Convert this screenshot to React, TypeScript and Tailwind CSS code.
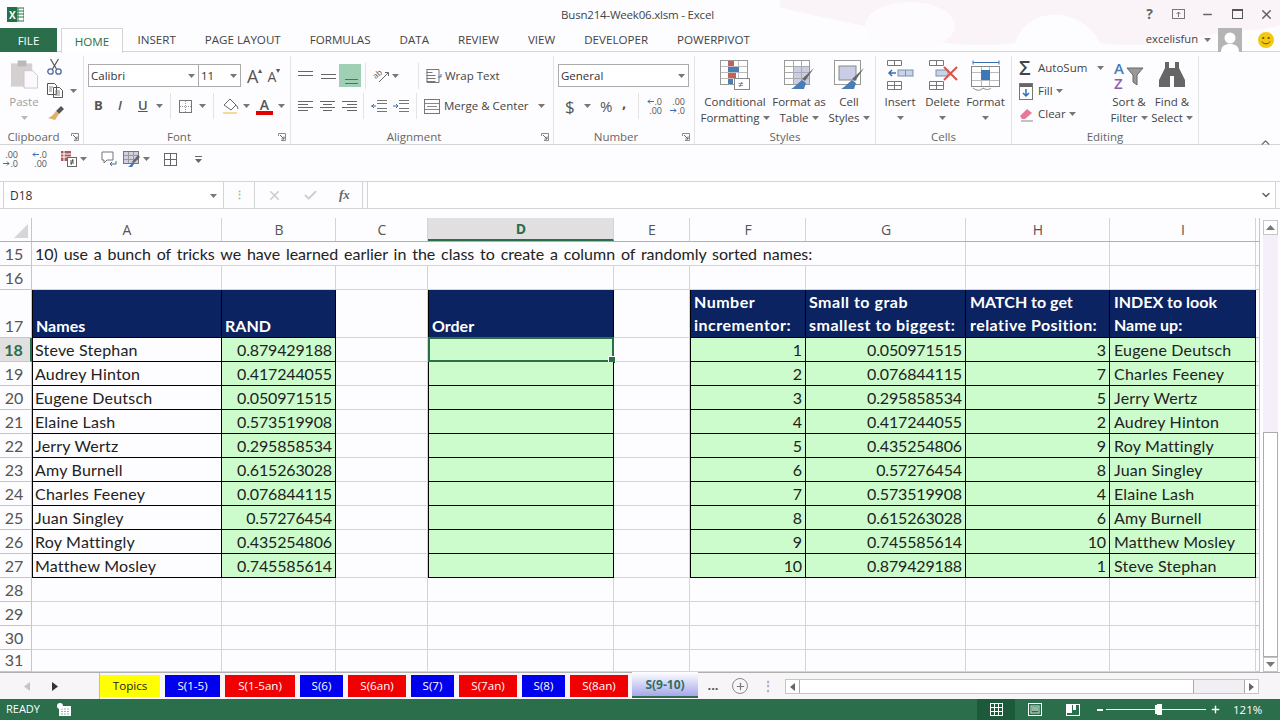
import { ReactNode } from 'react';
import { Check, ChevronDown, ChevronUp, Minus, Plus, X } from 'lucide-react';

const ui = "font-['Open_Sans',sans-serif]";
const gridFont = "font-['Lato',sans-serif]";

const Caret = ({ className = '' }: { className?: string }) => (
  <svg width="7" height="4" viewBox="0 0 7 4" className={`shrink-0 ${className}`}>
    <path d="M0 0h7L3.5 4z" fill="#777" />
  </svg>
);

const Launcher = () => (
  <svg width="8" height="8" viewBox="0 0 8 8" className="shrink-0">
    <path d="M.5 3V.5h7v7H3" fill="none" stroke="#8a8a8a" />
    <path d="M2 2l4 4M6 3.5V6H3.5" fill="none" stroke="#666" />
  </svg>
);

const Sep = () => <div className="w-px h-[26px] bg-[#e3e3e3] shrink-0" />;

function Lines({ rows }: { rows: number[][] }) {
  return (
    <svg width="17" height="14" viewBox="0 0 17 14" className="shrink-0">
      {rows.map(([x1, x2, y], i) => (
        <path key={i} d={`M${x1} ${y}.5H${x2}`} stroke="#666" />
      ))}
    </svg>
  );
}

// increase / decrease decimal buttons
function Decimal({ inc, className = '' }: { inc?: boolean; className?: string }) {
  const arrow = (
    <svg width="7" height="5" viewBox="0 0 7 5" className="shrink-0">
      <path d={inc ? 'M7 2.500H1M3 .5l-2 2 2 2' : 'M0 2.500h6M4 .5l2 2-2 2'} fill="none" stroke="#3b6fb0" />
    </svg>
  );
  return (
    <div className={`w-[15px] shrink-0 flex flex-col items-end text-[9px] leading-[9px] text-[#555] whitespace-nowrap ${className}`}>
      {inc ? <div className="flex items-center">{arrow}.0</div> : <div>.00</div>}
      {inc ? <div>.00</div> : <div className="flex items-center">{arrow}.0</div>}
    </div>
  );
}

function Grp({ w, label, launcher, children }: { w: string; label: string; launcher?: boolean; children: ReactNode }) {
  return (
    <div className={`${w} h-full shrink-0 flex flex-col border-r border-[#e4e4e4]`}>
      <div className="h-[76px] flex">{children}</div>
      <div className={`h-[17px] pt-[2px] flex items-center relative ${launcher ? 'pr-[16px]' : ''}`}>
        <span className="flex-1 text-center text-[11.5px] text-[#666]">{label}</span>
        {launcher && <span className="absolute right-[4px] top-[6px] flex"><Launcher /></span>}
      </div>
    </div>
  );
}

function BigBtn({ w, icon, l1, l2, caret }: { w: string; icon: ReactNode; l1: string; l2?: string; caret?: boolean }) {
  return (
    <div className={`${w} shrink-0 flex flex-col items-center pt-[4px]`}>
      <div className="h-[33px] flex items-start justify-center">{icon}</div>
      <div className="mt-[1px] h-[16px] leading-[16px] text-[11.5px] text-[#444] whitespace-nowrap">{l1}</div>
      <div className="h-[16px] flex items-center gap-[3px] text-[11.5px] text-[#444] whitespace-nowrap">
        {l2}
        {caret && <Caret />}
      </div>
    </div>
  );
}

const Combo = ({ w, text }: { w: string; text: string }) => (
  <div className={`${w} h-[23px] border border-[#ababab] bg-white flex items-center justify-between pl-[2px] pr-[3px] text-[11.5px] text-[#333]`}>
    <span>{text}</span>
    <Caret />
  </div>
);

const tabs = ['HOME', 'INSERT', 'PAGE LAYOUT', 'FORMULAS', 'DATA', 'REVIEW', 'VIEW', 'DEVELOPER', 'POWERPIVOT'];

function TitleBar() {
  return (
    <>
      <div className="h-[28px] flex items-center relative">
        <svg width="17" height="17" viewBox="0 0 17 17" className="ml-[7px] shrink-0">
          <rect x="6" y="2" width="11" height="13" fill="#fff" stroke="#217346" />
          <path d="M11 2v13M6 5h11M6 8h11M6 11h11" stroke="#217346" />
          <rect x="0" y="1" width="10" height="15" fill="#217346" />
          <text x="2" y="13" fontSize="10" fontWeight="700" fill="#fff" fontFamily="Open Sans">X</text>
        </svg>
        <div className="absolute inset-x-0 top-[5px] text-center text-[11.5px] tracking-[-0.2px] leading-[20px] text-[#444] pr-[5px]">Busn214-Week06.xlsm - Excel</div>
        <div className="ml-auto flex items-center gap-[16px] pr-[6px] text-[#666]">
          <span className="text-[14px] font-bold leading-none mr-[3px]">?</span>
          <svg width="13" height="10" viewBox="0 0 13 10"><rect x=".5" y=".5" width="12" height="9" fill="none" stroke="#777" /><path d="M6.5 8V3M4.5 5l2-2 2 2M2 .5h9" fill="none" stroke="#777" /></svg>
          <Minus size={13} strokeWidth={2.5} color="#666" />
          <svg width="11" height="10" viewBox="0 0 11 10" className="ml-[2px]"><rect x=".5" y=".5" width="10" height="9" fill="none" stroke="#555" /><path d="M0 1.5h11" stroke="#555" /></svg>
          <X size={15} strokeWidth={2.5} color="#666" />
        </div>
      </div>
      <div className="h-[24px] flex items-stretch border-b border-[#d4d4d4] relative">
        <div className="w-[57px] bg-[#2a6e4b] text-white text-[11.6px] flex items-center justify-center mb-[-1px] pt-[1px]">FILE</div>
        <div className="flex ml-[4px] text-[11.6px] text-[#444]">
          {tabs.map((t) =>
            t === 'HOME' ? (
              <div key={t} className="w-[62px] h-[25px] flex items-center justify-center pt-[1px] bg-[#fefefe] border border-b-0 border-[#d4d4d4] text-[#2a6e4b]">{t}</div>
            ) : (
              <div key={t} className="px-[14.5px] pt-[1px] flex items-center whitespace-nowrap">{t}</div>
            )
          )}
        </div>
        <div className="ml-auto flex items-center">
          <span className="text-[11.2px] text-[#444]">excelisfun</span>
          <Caret className="ml-[6px] mr-[7px]" />
          <div className="w-[24px] h-[24px] bg-[#b4b4b4] flex items-end justify-center overflow-hidden">
            <svg width="20" height="22" viewBox="0 0 20 22"><circle cx="10" cy="8" r="5.5" fill="#fff" /><path d="M1 22c0-6 4-8 9-8s9 2 9 8z" fill="#fff" /></svg>
          </div>
          <svg width="16" height="16" viewBox="0 0 16 16" className="ml-[16px] mr-[6px]">
            <circle cx="8" cy="8" r="8" fill="#f2c811" />
            <circle cx="5.3" cy="6" r="1.1" fill="#6a4a00" /><circle cx="10.7" cy="6" r="1.1" fill="#6a4a00" />
            <path d="M4 9.5c1 3 7 3 8 0" fill="none" stroke="#6a4a00" />
          </svg>
        </div>
      </div>
    </>
  );
}

function Ribbon() {
  return (
    <div className="h-[93px] flex border-b border-[#d4d4d4] pt-[4px] relative">
      {/* Clipboard */}
      <Grp w="w-[84px]" label="Clipboard" launcher>
        <div className="flex">
          <div className="w-[47px] flex flex-col items-center pt-[4px] pl-[1px] text-[#a0a0a0]">
            <svg width="29" height="30" viewBox="0 0 30 30">
              <rect x="1" y="3" width="22" height="24" fill="#d5d0d0" />
              <rect x="8" y="0" width="9" height="6" fill="#bdb8b8" />
              <path d="M14.5 10.5h9l5 5v13h-14z" fill="#fbf9fb" stroke="#cbc7cf" />
            </svg>
            <span className="text-[11.5px] leading-[16px] mt-[4px]">Paste</span>
            <Caret className="mt-[6px] opacity-50" />
          </div>
          <div className="flex flex-col pt-[3px] gap-[8px]">
            <svg width="15" height="16" viewBox="0 0 15 16">
              <path d="M3.500 0l6 10M11.500 0l-6 10" stroke="#555" strokeWidth="1.200" />
              <circle cx="3.500" cy="12.500" r="2.700" fill="none" stroke="#4d6a9a" strokeWidth="1.300" />
              <circle cx="11.500" cy="12.500" r="2.700" fill="none" stroke="#4d6a9a" strokeWidth="1.300" />
            </svg>
            <div className="flex items-center gap-[7px]">
              <svg width="16" height="15" viewBox="0 0 16 15"><path d="M.5.5h7l2 2v9h-9zM6.5 4.500h6l3 3v7h-9z" fill="#fff" stroke="#555" /><path d="M8 8h5M8 10h5M8 12h5M2 4h4M2 6h3M2 8h3" stroke="#888" /></svg>
              <Caret />
            </div>
            <svg width="17" height="15" viewBox="0 0 17 15"><path d="M9 5l5-5 3 3-5 5z" fill="#555" /><path d="M9 5l3 3-4 6-7-2c3-1 5-3 8-7z" fill="#e0b06a" /></svg>
          </div>
        </div>
      </Grp>

      {/* Font */}
      <Grp w="w-[207px]" label="Font" launcher>
        <div className="pl-[4px] pt-[8px] flex flex-col">
          <div className="flex items-center">
            <Combo w="w-[111px]" text="Calibri" />
            <Combo w="w-[43px] -ml-px" text="11" />
            <span className="ml-[6px] text-[#555] text-[18px] leading-none">A</span>
            <span className="text-[8px] text-[#555] -mt-[11px]">▴</span>
            <span className="ml-[5px] text-[#555] text-[14px] leading-none mt-[3px]">A</span>
            <span className="text-[8px] text-[#555] -mt-[11px]">▾</span>
          </div>
          <div className="flex items-center h-[26px] mt-[6px] pl-[6px] text-[13px] text-[#555]">
            <span className="font-bold w-[22px]">B</span>
            <span className="italic font-semibold w-[22px] pl-[2px]">I</span>
            <span className="underline font-semibold w-[16px]">U</span>
            <Caret className="ml-[2px] mr-[7px]" />
            <Sep />
            <svg width="13" height="13" viewBox="0 0 13 13" className="ml-[8px]"><rect x=".5" y=".5" width="12" height="12" fill="none" stroke="#777" /><path d="M6.500 1v11M1 6.500h11" stroke="#999" strokeDasharray="1 1" /></svg>
            <Caret className="ml-[7px] mr-[7px]" />
            <Sep />
            <svg width="18" height="16" viewBox="0 0 18 16" className="ml-[8px]"><path d="M2 7l6-6 6 6-5 5z" fill="#fff" stroke="#666" /><path d="M14 7c2 2 2 3 2 4" stroke="#888" /><path d="M1 15h14" stroke="#f6d9a0" strokeWidth="2" /></svg>
            <Caret className="ml-[3px] mr-[6px]" />
            <span className="relative w-[17px] h-[17px] text-center text-[14px] leading-[14px] font-semibold text-[#555]">
              A<span className="absolute left-0 bottom-0 w-[17px] h-[4px] bg-[#e30000]" />
            </span>
            <Caret className="ml-[5px]" />
          </div>
        </div>
      </Grp>

      {/* Alignment */}
      <Grp w="w-[263px]" label="Alignment" launcher>
        <div className="pl-[6px] pt-[8px] flex flex-col">
          <div className="flex items-center h-[23px]">
            <Lines rows={[[1, 16, 2], [1, 16, 6]]} />
            <div className="ml-[6px]"><Lines rows={[[1, 16, 5], [1, 16, 9]]} /></div>
            <div className="ml-[2px] w-[22px] h-[23px] bg-[#9fcfb5] flex items-center justify-center pt-[4px]"><Lines rows={[[3, 16, 8], [3, 16, 12]]} /></div>
            <div className="mx-[4px]"><Sep /></div>
            <svg width="17" height="15" viewBox="0 0 17 15" className="ml-[3px] overflow-visible"><text x="1" y="9" fontSize="8" fill="#555" transform="rotate(-40 5 8)" fontFamily="Open Sans">ab</text><path d="M6 14l9-9M12 4.500h3.500V8" fill="none" stroke="#666" /></svg>
            <Caret className="ml-[2px] mr-[19px]" />
            <Sep />
            <svg width="16" height="14" viewBox="0 0 16 14" className="ml-[7px]"><path d="M.5.5h9M.5 3.500h6M.5 6.500h9M.5 9.500h9M.5 12.500h9M1 .5h12v13H1z" fill="none" stroke="#777" /><path d="M15 5v3h-3" fill="none" stroke="#4d6a9a" /></svg>
            <span className="ml-[3px] text-[11.5px] text-[#444]">Wrap Text</span>
          </div>
          <div className="flex items-center h-[26px] mt-[6px]">
            <Lines rows={[[1, 16, 2], [1, 11, 5], [1, 16, 8], [1, 11, 11]]} />
            <div className="ml-[5px]"><Lines rows={[[1, 16, 2], [4, 13, 5], [1, 16, 8], [4, 13, 11]]} /></div>
            <div className="ml-[5px]"><Lines rows={[[1, 16, 2], [6, 16, 5], [1, 16, 8], [6, 16, 11]]} /></div>
            <div className="ml-[5px] mr-[7px]"><Sep /></div>
            <svg width="16" height="12" viewBox="0 0 16 12"><path d="M6 .5h10M6 3.500h10M6 8.500h10M6 11.500h10" stroke="#777" /><path d="M5 6H0M3 4L1 6l2 2" fill="none" stroke="#3b6fb0" /></svg>
            <svg width="16" height="12" viewBox="0 0 16 12" className="ml-[6px]"><path d="M6 .5h10M6 3.500h10M6 8.500h10M6 11.500h10" stroke="#777" /><path d="M0 6h5M3 4l2 2-2 2" fill="none" stroke="#3b6fb0" /></svg>
            <div className="ml-[7px] mr-[7px]"><Sep /></div>
            <svg width="16" height="15" viewBox="0 0 16 15"><rect x=".5" y=".5" width="15" height="14" fill="none" stroke="#777" /><path d="M1 4.500h14M1 10.500h14M3 7.500h10" stroke="#888" /></svg>
            <span className="ml-[4px] text-[11.5px] text-[#444] whitespace-nowrap">Merge &amp; Center</span>
            <Caret className="ml-[9px]" />
          </div>
        </div>
      </Grp>

      {/* Number */}
      <Grp w="w-[141px]" label="Number" launcher>
        <div className="pl-[4px] pt-[8px] flex flex-col">
          <Combo w="w-[131px]" text="General" />
          <div className="flex items-center h-[26px] mt-[6px] pl-[7px] text-[#555]">
            <span className="text-[17px] w-[13px] leading-none">$</span>
            <Caret className="ml-[6px] mr-[9px]" />
            <span className="text-[15px] w-[19px] leading-none">%</span>
            <span className="ml-[3px] text-[15px] font-bold w-[16px] leading-none -mt-[8px]">,</span>
            <div className="mr-[8px]"><Sep /></div>
            <Decimal inc />
            <Decimal className="ml-[8px]" />
          </div>
        </div>
      </Grp>

      {/* Styles */}
      <Grp w="w-[181px]" label="Styles">
        <BigBtn w="w-[80px]" l1="Conditional" l2="Formatting" caret icon={
          <svg width="31" height="31" viewBox="0 0 31 31">
            <rect x=".5" y=".5" width="27" height="24" fill="#fff" stroke="#999" />
            <path d="M9.500 1v24M18.500 1v24M1 6.500h26M1 12.500h26M1 18.500h26" stroke="#bbb" />
            <rect x="8" y="1" width="6" height="5" fill="#c8605a" /><rect x="8" y="7" width="11" height="5" fill="#4a7db5" /><rect x="8" y="13" width="8" height="5" fill="#c8605a" /><rect x="8" y="19" width="5" height="5" fill="#4a7db5" />
            <rect x="14.500" y="18.500" width="15" height="11" fill="#fff" stroke="#888" />
            <text x="18" y="28" fontSize="10" fill="#555" fontFamily="Open Sans">≠</text>
          </svg>} />
        <BigBtn w="w-[48px]" l1="Format as" l2="Table" caret icon={
          <svg width="31" height="31" viewBox="0 0 31 31">
            <rect x=".5" y=".5" width="25" height="24" fill="#fff" stroke="#999" />
            <rect x="9" y="7" width="16" height="17" fill="#c9cee6" />
            <path d="M9.500 1v24M17.500 1v24M1 6.500h24M1 12.500h24M1 18.500h24" stroke="#aaa" />
            <path d="M30 8l-9 13-3-2z" fill="#666" /><path d="M18 20l4 3-2 6H7c4-2 6-5 11-9z" fill="#4a7db5" />
          </svg>} />
        <BigBtn w="w-[52px]" l1="Cell" l2="Styles" caret icon={
          <svg width="31" height="31" viewBox="0 0 31 31">
            <rect x=".5" y=".5" width="26" height="24" fill="#fff" stroke="#999" />
            <rect x="5" y="6" width="17" height="14" fill="#c9cee6" stroke="#888" />
            <path d="M30 8l-9 13-3-2z" fill="#666" /><path d="M18 20l4 3-2 6H7c4-2 6-5 11-9z" fill="#4a7db5" />
          </svg>} />
      </Grp>

      {/* Cells */}
      <Grp w="w-[136px]" label="Cells">
        <div className="w-[3px]" />
        <BigBtn w="w-[42px]" l1="Insert" caret icon={
          <svg width="28" height="30" viewBox="0 0 28 30">
            <path d="M1.500.5h14v5h-14zM8.500.5v5M1.500 21.500h14v8h-14zM1.500 25.500h14M8.500 21.500v8" fill="#fff" stroke="#777" />
            <rect x="12" y="10" width="15" height="6" fill="#c9d3e6" stroke="#7a8fb0" /><path d="M19.500 10v6" stroke="#7a8fb0" />
            <path d="M10 13H3M6 10l-3 3 3 3" fill="none" stroke="#3b6fb0" strokeWidth="1.500" />
          </svg>} />
        <BigBtn w="w-[43px]" l1="Delete" caret icon={
          <svg width="32" height="30" viewBox="0 0 32 30">
            <path d="M2.500.5h14v5h-14zM9.500.5v5M2.500 21.500h14v8h-14zM2.500 25.500h14M9.500 21.500v8" fill="#fff" stroke="#777" />
            <rect x="9" y="10" width="12" height="6" fill="#c9d3e6" stroke="#7a8fb0" />
            <path d="M17 7l13 13M30 7L17 20" stroke="#d6544a" strokeWidth="2" />
          </svg>} />
        <BigBtn w="w-[43px]" l1="Format" caret icon={
          <svg width="30" height="31" viewBox="0 0 30 31">
            <path d="M2 2.500h26M2 .5v4M28 .5v4" fill="none" stroke="#3b6fb0" />
            <rect x=".5" y="6.500" width="28" height="20" fill="#fff" stroke="#888" />
            <path d="M10.500 7v19M18.500 7v19M1 12.500h27M1 20.500h27" stroke="#bbb" />
            <rect x="10" y="10" width="9" height="10" fill="#3f78b8" />
            <path d="M2 28c4 3 7 3 10 0 3 2 6 2 8 0" fill="none" stroke="#888" />
          </svg>} />
      </Grp>

      {/* Editing */}
      <Grp w="w-[187px]" label="Editing">
        <div className="w-[96px] shrink-0 pl-[7px] pt-[4px] flex flex-col gap-[7px] text-[11.5px] text-[#444]">
          <div className="flex items-center h-[16px]">
            <span className="w-[19px] text-[20px] leading-[16px] font-semibold text-[#444]">Σ</span>
            <span>AutoSum</span>
            <Caret className="ml-[10px]" />
          </div>
          <div className="flex items-center h-[16px]">
            <svg width="15" height="17" viewBox="0 0 15 17" className="mr-[4px]"><rect x=".5" y=".5" width="13" height="16" fill="#fff" stroke="#777" /><path d="M1 2.500h12" stroke="#666" strokeWidth="3" /><path d="M7 6v7M4 10l3 3 3-3" fill="none" stroke="#2f6fb5" strokeWidth="1.500" /></svg>
            <span>Fill</span>
            <Caret className="ml-[3px]" />
          </div>
          <div className="flex items-center h-[16px]">
            <svg width="15" height="15" viewBox="0 0 15 15" className="mr-[4px]"><path d="M1 9l7-7 5 4-7 6H3z" fill="#e8789a" /><path d="M2 14h12" stroke="#888" /></svg>
            <span>Clear</span>
            <Caret className="ml-[3px]" />
          </div>
        </div>
        <BigBtn w="w-[42px]" l1="Sort &amp;" l2="Filter" caret icon={
          <svg width="32" height="31" viewBox="0 0 32 31" className="overflow-visible">
            <text x="1" y="14" fontSize="15" fontWeight="600" fill="#4a7db5" fontFamily="Open Sans">A</text>
            <text x="1" y="29" fontSize="15" fontWeight="600" fill="#8a5fb0" fontFamily="Open Sans">Z</text>
            <path d="M14 8h16l-6 7v10l-4-3v-7z" fill="#999" stroke="#666" />
          </svg>} />
        <BigBtn w="w-[44px]" l1="Find &amp;" l2="Select" caret icon={
          <svg width="26" height="26" viewBox="0 0 26 26" className="mt-[2px]">
            <path d="M6 0h4v6h6V0h4v6l6 12v7H15V14h-4v11H0v-7L6 6z" fill="#666" />
          </svg>} />
      </Grp>

      <ChevronUp size={13} strokeWidth={2.5} color="#666" className="ml-auto mr-[8px] mt-[80px]" />
    </div>
  );
}

function QuickAccess() {
  return (
    <div className="h-[37px] flex items-center border-b border-[#d4d4d4] pl-[3px] pb-[8px] text-[#666]">
      <Decimal />
      <Decimal inc className="ml-[14px]" />
      <svg width="16" height="16" viewBox="0 0 16 16" className="ml-[14px]"><rect width="10" height="10" fill="#b0595a" /><path d="M3 0v10M0 3h10M0 6h10" stroke="#fff" /><rect x="6.500" y="6.500" width="9" height="9" fill="#fff" stroke="#666" /><path d="M9 10h4M9 12h4M12 8l-2 6" stroke="#555" /></svg>
      <Caret className="ml-[3px]" />
      <svg width="16" height="16" viewBox="0 0 16 16" className="ml-[14px]"><path d="M1 1h11v8H6l-3 3V9H1z" fill="#fff" stroke="#777" /><path d="M15 10v3H9M11 11l-2 2 2 2" fill="none" stroke="#3b6fb0" /></svg>
      <svg width="18" height="17" viewBox="0 0 18 17" className="ml-[6px]"><rect x=".5" y=".5" width="15" height="12" fill="#d0d0e0" stroke="#777" /><path d="M5.500 1v11M10.500 1v11M1 4.500h14M1 8.500h14" stroke="#999" /><path d="M17 6l-6 6-2-1 6-7z" fill="#666" /><path d="M9 11l2 2-2 3H5c2-1 3-3 4-5z" fill="#3f78b8" /></svg>
      <Caret className="ml-[2px]" />
      <svg width="13" height="13" viewBox="0 0 13 13" className="ml-[14px]"><rect x=".5" y=".5" width="12" height="12" fill="none" stroke="#666" /><path d="M6.500 1v11M1 6.500h11" stroke="#666" /></svg>
      <svg width="7" height="9" viewBox="0 0 7 9" className="ml-[18px]"><path d="M0 1.500h7" stroke="#666" /><path d="M0 4h7L3.500 8z" fill="#666" /></svg>
    </div>
  );
}

function FormulaBar() {
  return (
    <div className="h-[27px] flex items-stretch border-b border-[#d4d4d4] pl-[3px] pr-[4px]">
      <div className="w-[221px] border-x border-[#d4d4d4] bg-white flex items-center justify-between pl-[6px] pr-[6px] pt-[1px] text-[12px] text-[#333]">
        <span>D18</span>
        <Caret />
      </div>
      <div className="w-[30px] flex items-center justify-center text-[#aaa] text-[11px] font-bold leading-[4px]">⋮</div>
      <div className="w-[109px] border-x border-[#d4d4d4] flex items-center pl-[12px]">
        <X size={15} color="#ccc" strokeWidth={2.5} />
        <Check size={15} color="#ccc" strokeWidth={3} className="ml-[21px]" />
        <span className="ml-[21px] font-['Liberation_Serif',serif] italic font-bold text-[13px] text-[#666]">fx</span>
      </div>
      <div className="ml-[4px] flex-1 border-x border-[#d4d4d4] bg-white flex items-center justify-end pr-[3px]">
        <ChevronDown size={12} strokeWidth={3} color="#666" />
      </div>
    </div>
  );
}

const colClass = 'grid grid-cols-[32px_190px_114px_92px_186px_76px_116px_160px_144px_146px_4px]';
const cols = ['A', 'B', 'C', 'D', 'E', 'F', 'G', 'H', 'I'];

const blank = 'border-r border-b border-[#d4d4d4]';
const box = 'border-r border-b border-black bg-[#ccfccc] text-[#222]';
const head = 'border-r border-b border-black bg-[#0b2360] text-white font-bold';
const tail = 'border-b border-r border-[#c6c6c6]';
const num = 'text-right pr-[3px] tracking-[-0.15px]';

function RowHead({ n, active }: { n: number; active?: boolean }) {
  return (
    <div className={`flex items-end justify-center pr-[3px] leading-[23px] border-b border-r text-[16px] ${active ? 'bg-[#e1dfdf] text-[#2a6e4b] font-bold border-r-[#2a6e4b] border-r-2 border-b-[#c6c6c6]' : 'text-[#555] border-[#c6c6c6]'}`}>
      {n}
    </div>
  );
}

const left = [
  ['Steve Stephan', '0.879429188'], ['Audrey Hinton', '0.417244055'], ['Eugene Deutsch', '0.050971515'],
  ['Elaine Lash', '0.573519908'], ['Jerry Wertz', '0.295858534'], ['Amy Burnell', '0.615263028'],
  ['Charles Feeney', '0.076844115'], ['Juan Singley', '0.57276454'], ['Roy Mattingly', '0.435254806'],
  ['Matthew Mosley', '0.745585614'],
];
const right = [
  ['0.050971515', '3', 'Eugene Deutsch'], ['0.076844115', '7', 'Charles Feeney'], ['0.295858534', '5', 'Jerry Wertz'],
  ['0.417244055', '2', 'Audrey Hinton'], ['0.435254806', '9', 'Roy Mattingly'], ['0.57276454', '8', 'Juan Singley'],
  ['0.573519908', '4', 'Elaine Lash'], ['0.615263028', '6', 'Amy Burnell'], ['0.745585614', '10', 'Matthew Mosley'],
  ['0.879429188', '1', 'Steve Stephan'],
];

function Sheet() {
  return (
    <div className={`flex-1 min-w-0 ${gridFont} text-[16px] text-[#222]`}>
      <div className={`${colClass} h-[24px] ${ui} text-[14px] text-[#555] border-b border-[#b0b0b0]`}>
        <div className="border-r border-[#c6c6c6] flex items-end justify-end">
          <svg width="14" height="14" viewBox="0 0 14 14" className="mr-[3px] mb-[3px]"><path d="M14 0v14H0z" fill="#d6d6d6" /></svg>
        </div>
        {cols.map((c) => (
          <div key={c} className={`flex items-center justify-center pl-[1px] border-r border-[#d4d4d4] ${c === 'D' ? 'bg-[#e1dfdf] text-[#2a6e4b] font-bold border-b-2 border-b-[#2a6e4b]' : ''}`}>{c}</div>
        ))}
        <div className="border-r border-[#c6c6c6]" />
      </div>

      <div className={`${colClass} grid-rows-[24px_24px_48px_repeat(13,24px)_22px] leading-[23px]`}>
        <RowHead n={15} />
        <div className={`col-span-7 ${blank} pl-[3px] whitespace-nowrap [word-spacing:1.7px]`}>10) use a bunch of tricks we have learned earlier in the class to create a column of randomly sorted names:</div>
        <div className={blank} /><div className={blank} /><div className={tail} />

        <RowHead n={16} />
        {cols.map((c) => <div key={c} className={blank} />)}
        <div className={tail} />

        <RowHead n={17} />
        <div className={`${head} border-l flex items-end pl-[3px]`}>Names</div>
        <div className={`${head} flex items-end pl-[3px]`}>RAND</div>
        <div className={blank} />
        <div className={`${head} border-l flex items-end pl-[3px]`}>Order</div>
        <div className={blank} />
        <div className={`${head} border-l pl-[3px] tracking-[0.5px]`}>Number<br />incrementor:</div>
        <div className={`${head} pl-[3px] whitespace-nowrap tracking-[0.5px]`}>Small to grab<br />smallest to biggest:</div>
        <div className={`${head} pl-[4px] whitespace-nowrap`}>MATCH to get<br /><span className="tracking-[0.45px]">relative Position:</span></div>
        <div className={`${head} pl-[4px] whitespace-nowrap`}>INDEX to look<br />Name up:</div>
        <div className={tail} />

        {left.map(([name, rand], i) => (
          <div key={name} className="contents">
            <RowHead n={18 + i} active={i === 0} />
            <div className="border-r border-b border-l border-black pl-[2px] tracking-[0.2px]">{name}</div>
            <div className={`${box} ${num}`}>{rand}</div>
            <div className={blank} />
            <div className={`${box} border-l relative`}>
              {i === 0 && (
                <div className="absolute -left-px -top-px -right-px -bottom-px border-2 border-[#2a6e4b]">
                  <span className="absolute -right-[4px] -bottom-[4px] w-[6px] h-[6px] bg-[#2a6e4b] border border-white box-content" />
                </div>
              )}
            </div>
            <div className={blank} />
            <div className={`${box} border-l ${num}`}>{i + 1}</div>
            <div className={`${box} ${num}`}>{right[i][0]}</div>
            <div className={`${box} ${num}`}>{right[i][1]}</div>
            <div className={`${box} pl-[4px] whitespace-nowrap tracking-[0.2px]`}>{right[i][2]}</div>
            <div className={tail} />
          </div>
        ))}

        {[28, 29, 30, 31].map((n) => (
          <div key={n} className="contents">
            <RowHead n={n} />
            {cols.map((c) => <div key={c} className={blank} />)}
            <div className={tail} />
          </div>
        ))}
      </div>
    </div>
  );
}

function VScroll() {
  return (
    <div className="w-[20px] shrink-0 pl-[3px] pr-[2px] flex flex-col items-stretch">
      <div className="h-[15px] mt-[2px] flex items-center justify-center shrink-0 border border-[#c6c6c6] bg-white">
        <svg width="9" height="5" viewBox="0 0 9 5"><path d="M0 5h9L4.500 0z" fill="#777" /></svg>
      </div>
      <div className="h-[197px] bg-[#f4eff8] shrink-0" />
      <div className="h-[225px] border border-[#ababab] bg-white shrink-0" />
      <div className="h-[15px] flex items-center justify-center shrink-0 border border-[#c6c6c6] bg-white">
        <svg width="9" height="5" viewBox="0 0 9 5"><path d="M0 0h9L4.500 5z" fill="#777" /></svg>
      </div>
    </div>
  );
}

const sheets: [string, string, string][] = [
  ['Topics', 'w-[60px]', 'bg-[#ffff00] text-[#222]'],
  ['S(1-5)', 'w-[55px]', 'bg-[#0000ee] text-white'],
  ['S(1-5an)', 'w-[70px]', 'bg-[#f00000] text-white'],
  ['S(6)', 'w-[43px]', 'bg-[#0000ee] text-white'],
  ['S(6an)', 'w-[58px]', 'bg-[#f00000] text-white'],
  ['S(7)', 'w-[43px]', 'bg-[#0000ee] text-white'],
  ['S(7an)', 'w-[58px]', 'bg-[#f00000] text-white'],
  ['S(8)', 'w-[43px]', 'bg-[#0000ee] text-white'],
  ['S(8an)', 'w-[58px]', 'bg-[#f00000] text-white'],
];

function SheetTabs() {
  return (
    <div className="h-[27px] flex border-t border-[#b0b0b0] bg-[#f8f5f9] items-stretch">
      <div className="w-[100px] shrink-0 flex items-center border-r border-[#bdbdbd]">
        <svg width="6" height="9" viewBox="0 0 6 9" className="ml-[24px]"><path d="M6 0v9L0 4.500z" fill="#c4c4c4" /></svg>
        <svg width="6" height="9" viewBox="0 0 6 9" className="ml-[22px]"><path d="M0 0v9l6-4.500z" fill="#333" /></svg>
      </div>
      <div className="flex items-start gap-[5px] pt-[2px]">
        {sheets.map(([t, w, c]) => (
          <div key={t} className={`${w} h-[22px] flex items-center justify-center text-[11.6px] shrink-0 ${c}`}>{t}</div>
        ))}
      </div>
      <div className="w-[66px] ml-[4px] h-[26px] -mt-px bg-gradient-to-b from-white to-[#a7a7ea] border-b-2 border-[#2a6e4b] flex items-center justify-center text-[12px] font-bold text-[#2f6f5c] shrink-0 pt-[1px]">S(9-10)</div>
      <div className="w-[30px] flex items-center justify-center text-[13px] font-bold text-[#555]">...</div>
      <div className="flex items-center ml-[4px]">
        <div className="w-[16px] h-[16px] rounded-full border border-[#8a8a8a] flex items-center justify-center">
          <Plus size={11} strokeWidth={2.5} color="#777" />
        </div>
      </div>
      <div className="w-[37px] flex items-center justify-center text-[#aaa] text-[12px] font-bold pl-[3px]">⋮</div>
      <div className="w-[474px] h-[15px] mt-[6px] flex border border-[#c6c6c6] bg-[#f1eff3]">
        <div className="w-[14px] flex items-center justify-center border-r border-[#ababab] bg-white">
          <svg width="5" height="8" viewBox="0 0 5 8"><path d="M5 0v8L0 4z" fill="#666" /></svg>
        </div>
        <div className="w-[394px] bg-white border-r border-[#ababab]" />
        <div className="flex-1" />
        <div className="w-[14px] flex items-center justify-center border-l border-[#ababab] bg-white">
          <svg width="5" height="8" viewBox="0 0 5 8"><path d="M0 0v8l5-4z" fill="#666" /></svg>
        </div>
      </div>
    </div>
  );
}

function StatusBar() {
  return (
    <div className="h-[21px] bg-[#2a6e4b] text-white flex items-center text-[11px]">
      <span className="ml-[6px]">READY</span>
      <svg width="14" height="13" viewBox="0 0 14 13" className="ml-[17px]">
        <rect x="2" y="3" width="12" height="10" fill="#fff" /><path d="M4.500 6h1M7.500 6h1M10.500 6h1M4.500 8.500h1M7.500 8.500h1M10.500 8.500h1M4.500 11h1M7.500 11h1M10.500 11h1" stroke="#2a6e4b" />
        <circle cx="3" cy="3" r="3" fill="#fff" />
      </svg>
      <div className="ml-auto w-[38px] h-[21px] bg-[#1d5a3b] flex items-center justify-center">
        <svg width="13" height="13" viewBox="0 0 13 13"><rect x=".5" y=".5" width="12" height="12" fill="none" stroke="#fff" /><path d="M4.500 1v11M8.500 1v11M1 4.500h11M1 8.500h11" stroke="#fff" /></svg>
      </div>
      <svg width="14" height="13" viewBox="0 0 14 13" className="ml-[13px]"><rect x=".5" y=".5" width="13" height="12" fill="none" stroke="#fff" /><rect x="3" y="3" width="8" height="7" fill="none" stroke="#cfe3d8" /><path d="M4 5h6M4 7h6" stroke="#fff" /></svg>
      <svg width="14" height="12" viewBox="0 0 14 12" className="ml-[24px]"><rect x=".5" y=".5" width="13" height="11" fill="none" stroke="#fff" /><rect x="1" y="1" width="5" height="8" fill="#fff" /><rect x="7" y="1" width="3" height="5" fill="#fff" /></svg>
      <div className="ml-[17px] w-[6px] h-[2px] bg-white" />
      <div className="ml-[3px] w-[100px] h-px bg-white flex justify-center items-center pl-[6px]">
        <div className="w-[5px] h-[11px] bg-white shadow-[-3px_0_0_-1px_#fff]" />
      </div>
      <Plus size={11} strokeWidth={3} className="ml-[4px]" />
      <span className="ml-[12px] w-[47px] text-[11.5px]">121%</span>
    </div>
  );
}

export default function App() {
  return (
    <div className={`w-[1280px] h-[720px] overflow-hidden flex flex-col relative bg-[#fdfcfe] ${ui}`}>
      {/* faint cloud artwork behind the title bar */}
      <svg width="500" height="52" viewBox="0 0 500 52" className="absolute right-0 top-0 pointer-events-none">
        <path d="M0 0h500v25c-20 8-50 4-70 10-40 10-80 12-110 8-10-20-30-30-50-28-20 2-30 14-35 28-30 4-70 2-100-6-30-8-100-20-135-30z" fill="#faf4f9" />
        <ellipse cx="130" cy="26" rx="45" ry="24" fill="#fdfbfd" />
      </svg>
      <div className="relative flex flex-col">
        <TitleBar />
      </div>
      <div className="relative flex flex-col">
        <Ribbon />
        <QuickAccess />
        <FormulaBar />
      </div>
      <div className="h-[9px]" />
      <div className="flex flex-1 min-h-0">
        <Sheet />
        <VScroll />
      </div>
      <SheetTabs />
      <StatusBar />
    </div>
  );
}
